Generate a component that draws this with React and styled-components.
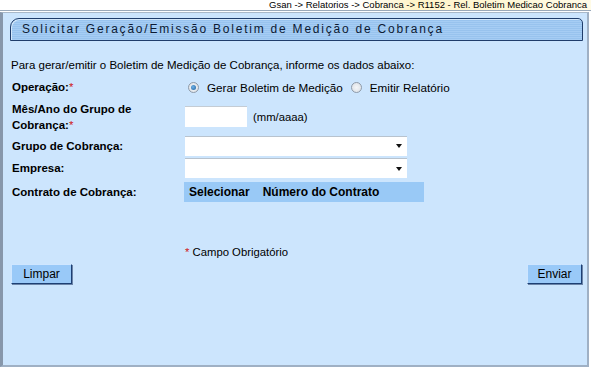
import React from "react";
import styled, { createGlobalStyle } from "styled-components";

const Global = createGlobalStyle`
  html, body { margin: 0; padding: 0; background: #ffffff; }
  body { font-family: "Liberation Sans", Arial, sans-serif; font-size: 11.5px; color: #000; }
`;

const Crumbs = styled.div`
  height: 10px;
  line-height: 10px;
  font-size: 9.5px;
  text-align: right;
  padding-right: 4px;
  color: #000;
  background: linear-gradient(to right, #ffffff 60%, #fff4c8 70%, #fffbe6 100%);
  border-bottom: 1px solid #9aa9ba;
  overflow: hidden;
  white-space: nowrap;
`;

const Panel = styled.div`
  margin: 1px 2px 0 0;
  height: 355px;
  box-sizing: border-box;
  background: #cce5fd;
  border-left: 3px solid #8797ab;
  border-right: 2px solid #9fb0c4;
  border-top: 1px solid #a9b8c8;
  border-bottom: 2px solid #9fb0c4;
  padding: 5px 3px 0 7px;
`;

const Tab = styled.div`
  height: 23px;
  margin-right: 1px;
  box-sizing: border-box;
  border: 1px solid #1f3d6b;
  border-radius: 9px 5px 0 0;
  background: repeating-linear-gradient(
    to bottom,
    #a6cdf4 0px,
    #a6cdf4 1px,
    #98c3ee 1px,
    #98c3ee 2px
  );
  padding-left: 11px;
  font-size: 12px;
  letter-spacing: 1.78px;
  line-height: 21px;
  color: #0c1a33;
  box-shadow: inset 1px 1px 0 #d4e8fb;
`;

const Intro = styled.p`
  margin: 17px 0 4px 1px;
  line-height: 14px;
`;

const Form = styled.div`
  display: grid;
  grid-template-columns: 173px 1fr;
  grid-auto-rows: min-content;
  padding-left: 2px;
`;

const Label = styled.div`
  font-weight: bold;
  display: flex;
  align-items: center;
  min-height: ${(p) => p.h || 22}px;
  line-height: 16px;
`;

const Field = styled.div`
  display: flex;
  align-items: center;
  gap: 6px;
  min-height: ${(p) => p.h || 22}px;
`;

const Req = styled.span`
  color: #d01818;
  font-weight: normal;
`;

const Radio = styled.span`
  display: inline-block;
  width: 11px;
  height: 11px;
  border-radius: 50%;
  box-sizing: border-box;
  border: 1px solid #8e9aa8;
  background: radial-gradient(circle, #f4f6f8 0%, #d9dee4 100%);
  position: relative;
  margin: 0 8px 0 ${(p) => p.ml}px;
  &::after {
    content: "";
    display: ${(p) => (p.checked ? "block" : "none")};
    position: absolute;
    left: 2px;
    top: 2px;
    width: 5px;
    height: 5px;
    border-radius: 50%;
    background: radial-gradient(circle at 40% 40%, #6fb2e8, #1d5f9c);
  }
`;

const RadioText = styled.span`
  font-size: 11.7px;
`;

const TextBox = styled.div`
  width: 62px;
  height: 21px;
  background: #fff;
  border-top: 1px solid #c4ccd4;
  box-sizing: border-box;
`;

const Unit = styled.span`
  font-size: 11.3px;
`;

const Select = styled.div`
  width: 222px;
  height: 20px;
  background: #fff;
  border-top: 1px solid #b8c3ce;
  box-sizing: border-box;
  display: flex;
  justify-content: flex-end;
  align-items: center;
  padding-right: 5px;
  &::after {
    content: "";
    border-left: 3px solid transparent;
    border-right: 3px solid transparent;
    border-top: 4px solid #111;
  }
`;

const ContractBar = styled.div`
  width: 240px;
  height: 20px;
  background: #99c9f6;
  display: flex;
  align-items: center;
  font-weight: bold;
  font-size: 12px;
  gap: 13px;
  padding-left: 5px;
  box-sizing: border-box;
  margin-left: -1px;
`;

const Note = styled.div`
  margin: 42px 0 0 175px;
  font-size: 11.3px;
  line-height: 13px;
`;

const Actions = styled.div`
  display: flex;
  justify-content: space-between;
  margin-top: 5px;
  padding-right: 2px;
`;

const Button = styled.button`
  font-family: "Liberation Sans", Arial, sans-serif;
  font-size: 12px;
  height: 20px;
  width: ${(p) => p.w}px;
  background: #99c9f8;
  color: #000;
  border: 1px solid;
  border-color: #cfe6ff #1d3f73 #1d3f73 #cfe6ff;
  box-shadow: 1px 1px 0 #6b84a8;
  padding: 0;
  margin-left: ${(p) => p.ml || 0}px;
`;

export default function App() {
  return (
    <>
      <Global />
      <Crumbs>Gsan -&gt; Relatorios -&gt; Cobranca -&gt; R1152 - Rel. Boletim Medicao Cobranca</Crumbs>
      <Panel>
        <Tab>Solicitar Geração/Emissão Boletim de Medição de Cobrança</Tab>
        <Intro>Para gerar/emitir o Boletim de Medição de Cobrança, informe os dados abaixo:</Intro>
        <Form>
          <Label>
            Operação:<Req>*</Req>
          </Label>
          <Field style={{ gap: 0 }}>
            <Radio checked ml={3} />
            <RadioText>Gerar Boletim de Medição</RadioText>
            <Radio ml={8} />
            <RadioText>Emitir Relatório</RadioText>
          </Field>

          <Label h={37}>
            <span>
              Mês/Ano do Grupo de
              <br />
              Cobrança:<Req>*</Req>
            </span>
          </Label>
          <Field h={37}>
            <TextBox />
            <Unit>(mm/aaaa)</Unit>
          </Field>

          <Label h={21}>Grupo de Cobrança:</Label>
          <Field h={21}>
            <Select />
          </Field>

          <Label h={24}>Empresa:</Label>
          <Field h={24}>
            <Select />
          </Field>

          <Label h={24}>Contrato de Cobrança:</Label>
          <Field h={24}>
            <ContractBar>
              <span>Selecionar</span>
              <span>Número do Contrato</span>
            </ContractBar>
          </Field>
        </Form>
        <Note>
          <Req>*</Req> Campo Obrigatório
        </Note>
        <Actions>
          <Button w={61} ml={1}>Limpar</Button>
          <Button w={55}>Enviar</Button>
        </Actions>
      </Panel>
    </>
  );
}
